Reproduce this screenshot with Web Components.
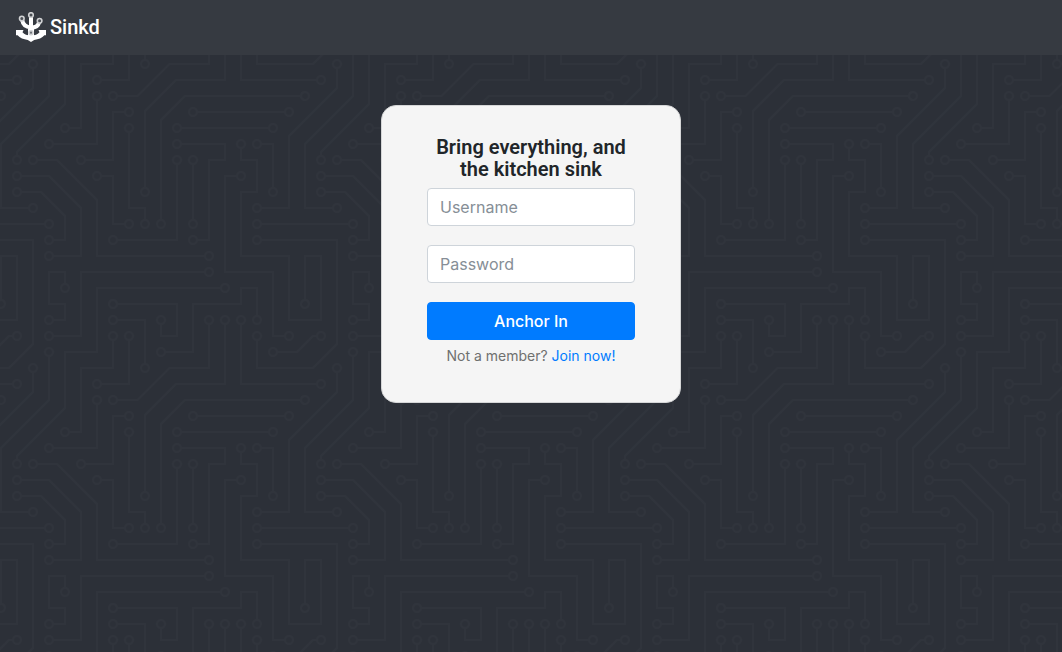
<!DOCTYPE html>
<html lang="en">
<head>
<meta charset="utf-8">
<meta name="viewport" content="width=device-width, initial-scale=1">
<title>Sinkd</title>
<style>
  body {
    margin: 0;
    font-family: Inter, "Liberation Sans", sans-serif;
    font-size: 16px;
    line-height: 24px;
    color: #212529;
    background: #2c3038;
  }
</style>
</head>
<body>
<sinkd-page>
  <sinkd-navbar slot="header">Sinkd</sinkd-navbar>
  <sinkd-login heading="Bring everything, and the kitchen sink"></sinkd-login>
</sinkd-page>

<script>
// Traces of one 304x304 tile of the circuit board backdrop.
const TILE = 304;
const TRACES = 'M44.1 224a5 5 0 1 1 0 2H0v-2h44.1zm160 48a5 5 0 1 1 0 2H82v-2h122.1zm57.8-46a5 5 0 1 1 0-2H304v2h-42.1zm0 16a5 5 0 1 1 0-2H304v2h-42.1zm6.2-114a5 5 0 1 1 0 2h-86.2a5 5 0 1 1 0-2h86.2zm-256-48a5 5 0 1 1 0 2H0v-2h12.1zm185.8 34a5 5 0 1 1 0-2h86.2a5 5 0 1 1 0 2h-86.2zM258 12.1a5 5 0 1 1-2 0V0h2v12.1zm-64 208a5 5 0 1 1-2 0v-54.2a5 5 0 1 1 2 0v54.2zm48-198.2V80h62v2h-64V21.9a5 5 0 1 1 2 0zm16 16V64h46v2h-48V37.9a5 5 0 1 1 2 0zm-128 96V208h16v12.1a5 5 0 1 1-2 0V210h-16v-76.1a5 5 0 1 1 2 0zm-5.9-21.9a5 5 0 1 1 0 2H114v48H85.9a5 5 0 1 1 0-2H112v-48h12.1zm-6.2 130a5 5 0 1 1 0-2H176v-74.1a5 5 0 1 1 2 0V242h-60.1zm-16-64a5 5 0 1 1 0-2H114v48h10.1a5 5 0 1 1 0 2H112v-48h-10.1zM66 284.1a5 5 0 1 1-2 0V274H50v30h-2v-32h18v12.1zM236.1 176a5 5 0 1 1 0 2H226v94h48v32h-2v-30h-48v-98h12.1zm25.8-30a5 5 0 1 1 0-2H274v44.1a5 5 0 1 1-2 0V146h-10.1zm-64 96a5 5 0 1 1 0-2H208v-80h16v-14h-42.1a5 5 0 1 1 0-2H226v18h-16v80h-12.1zm86.2-210a5 5 0 1 1 0 2H272V0h2v32h10.1zM98 101.9V146H53.9a5 5 0 1 1 0-2H96v-42.1a5 5 0 1 1 2 0zM53.9 34a5 5 0 1 1 0-2H80V0h2v34H53.9zm60.1 3.9V66H82v64H69.9a5 5 0 1 1 0-2H80V64h32V37.9a5 5 0 1 1 2 0zM101.9 82a5 5 0 1 1 0-2H128V37.9a5 5 0 1 1 2 0V82h-28.1zm16-64a5 5 0 1 1 0-2H146v44.1a5 5 0 1 1-2 0V18h-26.1zm102.2 270a5 5 0 1 1 0 2H98v14h-2v-16h124.1zM242 149.9V160h16v34h-16v62h48v48h-2v-46h-48v-66h16v-30h-16v-12.1a5 5 0 1 1 2 0zM53.9 18a5 5 0 1 1 0-2H64V2H48V0h18v18H53.9zm112 32a5 5 0 1 1 0-2H192V0h50v2h-48v48h-28.1zm-48-48a5 5 0 0 1-9.8-2h2.07a3 3 0 1 0 5.66 0H178v34h-18V21.9a5 5 0 1 1 2 0V32h14V2h-58.1zm0 96a5 5 0 1 1 0-2H137l32-32h39V21.9a5 5 0 1 1 2 0V66h-40.17l-32 32H117.9zm28.1 90.1a5 5 0 1 1-2 0v-76.51L175.59 80H224V21.9a5 5 0 1 1 2 0V82h-49.59L146 112.41v75.69zm16 32a5 5 0 1 1-2 0v-99.51L184.59 96H300.1a5 5 0 0 1 3.9-3.9v2.07a3 3 0 0 0 0 5.66v2.07a5 5 0 0 1-3.9-3.9H185.41L162 121.41v98.69zm-144-64a5 5 0 1 1-2 0v-3.51l48-48V48h32V0h2v50H66v55.41l-48 48v2.69zM50 53.9v43.51l-48 48V208h26.1a5 5 0 1 1 0 2H0v-65.41l48-48V53.9a5 5 0 1 1 2 0zm-16 16V89.41l-34 34v-2.82l32-32V69.9a5 5 0 1 1 2 0zM12.1 32a5 5 0 1 1 0 2H9.41L0 43.41V40.6L8.59 32h3.51zm265.8 18a5 5 0 1 1 0-2h18.69l7.41-7.41v2.82L297.41 50H277.9zm-16 160a5 5 0 1 1 0-2H288v-71.41l16-16v2.82l-14 14V210h-28.1zm-208 32a5 5 0 1 1 0-2H64v-22.59L40.59 194H21.9a5 5 0 1 1 0-2H41.41L66 216.59V242H53.9zm150.2 14a5 5 0 1 1 0 2H96v-56.6L56.6 162H37.9a5 5 0 1 1 0-2h19.5L98 200.6V256h106.1zm-150.2 2a5 5 0 1 1 0-2H80v-46.59L48.59 178H21.9a5 5 0 1 1 0-2H49.41L82 208.59V258H53.9zM34 39.8v1.61L9.41 66H0v-2h8.59L32 40.59V0h2v39.8zM2 300.1a5 5 0 0 1 3.9 3.9H3.83A3 3 0 0 0 0 302.17V256h18v48h-2v-46H2v42.1zM34 241v63h-2v-62H0v-2h34v1zM17 18H0v-2h16V0h2v18h-1zm273-2h14v2h-16V0h2v16zm-32 273v15h-2v-14h-14v14h-2v-16h18v1zM0 92.1A5.02 5.02 0 0 1 6 97a5 5 0 0 1-6 4.9v-2.07a3 3 0 1 0 0-5.66V92.1zM80 272h2v32h-2v-32zm37.9 32h-2.07a3 3 0 0 0-5.66 0h-2.07a5 5 0 0 1 9.8 0zM5.9 0A5.02 5.02 0 0 1 0 5.9V3.83A3 3 0 0 0 3.83 0H5.9zm294.2 0h2.07A3 3 0 0 0 304 3.83V5.9a5 5 0 0 1-3.9-5.9zm3.9 300.1v2.07a3 3 0 0 0-1.83 1.83h-2.07a5 5 0 0 1 3.9-3.9z';

// Every large arc is a solder pad on the 16px grid; returns the hole of each,
// wound against the pad so that the nonzero fill leaves it open.
function padHoles(d) {
  let x = 0, y = 0, startX = 0, startY = 0, holes = '';
  const snap = v => 16 * Math.round((v - 1) / 16) + 1;
  for (const [, op, args] of d.matchAll(/([a-z])([^a-z]*)/gi)) {
    const n = (args.match(/-?\d*\.?\d+/g) || []).map(Number);
    const rel = op === op.toLowerCase();
    switch (op.toLowerCase()) {
      case 'm':
        x = startX = n[0] + (rel ? x : 0);
        y = startY = n[1] + (rel ? y : 0);
        break;
      case 'l':
        x = n[0] + (rel ? x : 0);
        y = n[1] + (rel ? y : 0);
        break;
      case 'h': x = n[0] + (rel ? x : 0); break;
      case 'v': y = n[0] + (rel ? y : 0); break;
      case 'a':
        if (n[0] === 5 && n[3] === 1) {
          holes += `M${snap(x)} ${snap(y) + 3}a3 3 0 1 0 0-6 3 3 0 0 0 0 6z`;
        }
        x = n[5] + (rel ? x : 0);
        y = n[6] + (rel ? y : 0);
        break;
      case 'z': x = startX; y = startY; break;
    }
  }
  return holes;
}

class CircuitBackdrop extends HTMLElement {
  constructor() {
    super();
    this.attachShadow({ mode: 'open' }).innerHTML = `
      <style>
        :host { display: block; overflow: hidden; background: #2c3038; }
        svg { display: block; width: 100%; height: 100%; }
        path { fill: #30343c; }
      </style>
      <svg aria-hidden="true">
        <defs>
          <pattern id="board" width="${TILE}" height="${TILE}" y="-1" patternUnits="userSpaceOnUse">
            <path d="${TRACES}${padHoles(TRACES)}"/>
          </pattern>
        </defs>
        <rect width="100%" height="100%" fill="url(#board)"/>
      </svg>`;
  }
}

class SinkdPage extends HTMLElement {
  constructor() {
    super();
    this.attachShadow({ mode: 'open' }).innerHTML = `
      <style>
        :host { display: flex; flex-direction: column; min-height: 100vh; position: relative; }
        circuit-backdrop { position: absolute; inset: 0; z-index: -1; }
        main { display: flex; justify-content: center; padding: 50px 0; }
      </style>
      <circuit-backdrop></circuit-backdrop>
      <slot name="header"></slot>
      <main><slot></slot></main>`;
  }
}

class SinkdAnchor extends HTMLElement {
  constructor() {
    super();
    this.attachShadow({ mode: 'open' }).innerHTML = `
      <style>
        :host { display: block; }
        svg { display: block; }
      </style>
      <svg width="30" height="30" viewBox="0 0 30 30" fill="none" stroke="#fff" aria-hidden="true">
        <g stroke-width="4">
          <path d="M15 5V18"/>
          <path d="M6.200 8C6.800 12.500 9.500 15 15 15.400"/>
          <path d="M23 10.500C22.300 14 19.500 15.600 15 15.800"/>
        </g>
        <path fill="#fff" stroke="none" d="M0 18h7.500l-1 2.300c2 2.300 4.500 3.200 8.500 3.400 4-.2 6.500-1.100 8.500-3.400l-1-2.300H30v5.200h-1.600c-2.200 2.600-6 4.200-10.200 4.700L15 30l-3.200-2.100C7.600 27.400 3.800 25.800 1.600 23.200H0z"/>
        <path d="M15 17v7" stroke-width="6"/>
        <g stroke="#d0d1d3" stroke-width="1.600" fill="#4a4e54">
          <circle cx="15" cy="3" r="2.300"/>
          <circle cx="5.800" cy="6.600" r="2.300"/>
          <circle cx="23.600" cy="8.800" r="2.300"/>
          <circle cx="15" cy="20.700" r="1.900" fill="#6a6e73"/>
        </g>
      </svg>`;
  }
}

class SinkdNavbar extends HTMLElement {
  constructor() {
    super();
    this.attachShadow({ mode: 'open' }).innerHTML = `
      <style>
        :host { display: block; }
        nav { display: flex; padding: 8px 16px; background: #363a41; }
        a {
          display: flex; align-items: center; gap: 4px;
          padding: 4px 0 5px;
          color: #fff; text-decoration: none;
          font-family: Roboto, Inter, sans-serif;
          font-size: 20px; line-height: 30px; font-weight: 500;
        }
      </style>
      <nav><a href="#"><sinkd-anchor></sinkd-anchor><slot></slot></a></nav>`;
  }
}

class SinkdLogin extends HTMLElement {
  constructor() {
    super();
    this.attachShadow({ mode: 'open' }).innerHTML = `
      <style>
        :host { display: block; width: 300px; max-width: 100%; }
        *, *::before { box-sizing: border-box; }
        form {
          display: flex; flex-direction: column;
          padding: 30px 45px 35px;
          background: #f5f5f5;
          border: 1px solid #d5d6d7;
          border-radius: 15px;
        }
        h1 {
          margin: 0 0 8px; text-align: center;
          font-family: Roboto, Inter, sans-serif;
          font-size: 20px; line-height: 22px; font-weight: 600;
        }
        input, button {
          width: 100%; height: 38px; margin: 0; padding: 6px 12px;
          font: inherit; border-radius: 4px;
        }
        input { color: #495057; background: #fff; border: 1px solid #ced4da; margin-bottom: 19px; }
        input::placeholder { color: #868e96; opacity: 1; }
        button { color: #fff; background: #007bff; border: 1px solid #007bff; font-weight: 500; cursor: pointer; }
        p { margin: 5px 0 0; text-align: center; font-size: 14px; line-height: 22px; color: #6f706f; }
        a { color: #007bff; text-decoration: none; }
      </style>
      <form>
        <h1></h1>
        <input type="text" aria-label="Username" placeholder="Username" autocomplete="username">
        <input type="password" aria-label="Password" placeholder="Password" autocomplete="current-password">
        <button type="submit">Anchor In</button>
        <p>Not a member? <a href="#">Join now!</a></p>
      </form>`;
    this.shadowRoot.querySelector('h1').textContent = this.getAttribute('heading');
  }
}

customElements.define('circuit-backdrop', CircuitBackdrop);
customElements.define('sinkd-anchor', SinkdAnchor);
customElements.define('sinkd-navbar', SinkdNavbar);
customElements.define('sinkd-login', SinkdLogin);
customElements.define('sinkd-page', SinkdPage);
</script>
</body>
</html>
